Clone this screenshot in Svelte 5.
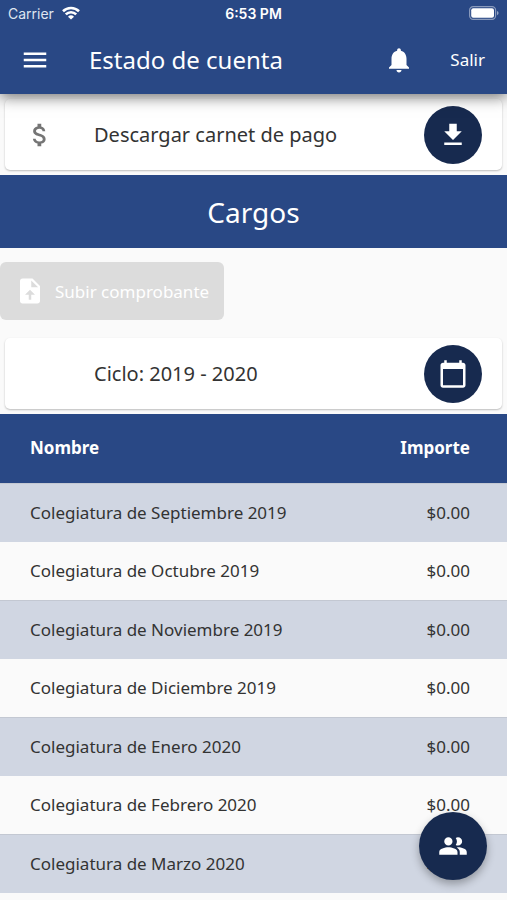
<script>
  let menuAbierto = $state(false);
  let ciclo = $state("2019 - 2020");
  let comprobante = $state(false);
  let cargos = $state([
    { nombre: "Colegiatura de Septiembre 2019", importe: 0 },
    { nombre: "Colegiatura de Octubre 2019", importe: 0 },
    { nombre: "Colegiatura de Noviembre 2019", importe: 0 },
    { nombre: "Colegiatura de Diciembre 2019", importe: 0 },
    { nombre: "Colegiatura de Enero 2020", importe: 0 },
    { nombre: "Colegiatura de Febrero 2020", importe: 0 },
    { nombre: "Colegiatura de Marzo 2020", importe: 0 },
  ]);

  function formatImporte(importe) {
    return "$" + importe.toFixed(2);
  }
</script>

<header>
  <div class="status">
    <div class="carrier">
      <span>Carrier</span>
      <svg width="18" height="14" viewBox="0 0 18 14" stroke="#fff" stroke-width="2.6">
        <path d="M1 5.2a11.5 11.5 0 0 1 16 0" fill="none" />
        <path d="M3.8 8.4a7.4 7.4 0 0 1 10.4 0" fill="none" />
        <path d="M9 13.6L6 10.8a4.3 4.3 0 0 1 6 0z" fill="#fff" stroke="none" />
      </svg>
    </div>
    <span class="time">6:53 PM</span>
    <svg class="battery" width="30" height="14" viewBox="0 0 30 14">
      <rect x="0.6" y="0.6" width="26" height="12.8" rx="3.6" fill="none" stroke="#fff" stroke-opacity="0.45" stroke-width="1.2" />
      <rect x="2.2" y="2.2" width="22.8" height="9.6" rx="2" fill="#fff" />
      <path d="M28 5v4.2q1.6-.6 1.6-2.1T28 5z" fill="#fff" fill-opacity="0.5" />
    </svg>
  </div>
  <nav>
    <button aria-label="Menú" aria-expanded={menuAbierto} onclick={() => (menuAbierto = !menuAbierto)}>
      <svg width="30" height="30" viewBox="0 0 24 24"><path d="M3 18h18v-2H3v2zm0-5h18v-2H3v2zm0-7v2h18V6H3z" /></svg>
    </button>
    <h1>Estado de cuenta</h1>
    <button class="bell" aria-label="Notificaciones">
      <svg width="30" height="30" viewBox="0 0 24 24"><path d="M12 22c1.100 0 2-.9 2-2h-4c0 1.100.9 2 2 2zm6-6v-5c0-3.070-1.640-5.640-4.500-6.320V4c0-.83-.67-1.500-1.500-1.500s-1.500.67-1.500 1.500v.68C7.630 5.360 6 7.920 6 11v5l-2 2v1h16v-1l-2-2z" /></svg>
    </button>
    <button class="salir">Salir</button>
  </nav>
</header>

<main>
  <div class="card">
    <svg class="lead" width="30" height="30" viewBox="0 0 24 24"><path d="M11.800 10.900c-2.270-.59-3-1.200-3-2.150 0-1.090 1.010-1.850 2.700-1.850 1.780 0 2.440.85 2.500 2.100h2.210c-.07-1.720-1.120-3.300-3.210-3.810V3h-3v2.160c-1.940.42-3.500 1.680-3.500 3.610 0 2.310 1.910 3.460 4.700 4.130 2.500.6 3 1.480 3 2.410 0 .69-.49 1.790-2.700 1.790-2.060 0-2.870-.92-2.980-2.100h-2.200c.12 2.190 1.760 3.420 3.680 3.830V21h3v-2.150c1.950-.37 3.500-1.500 3.500-3.550 0-2.840-2.430-3.810-4.700-4.400z" /></svg>
    <span class="text">Descargar carnet de pago</span>
    <button class="round" aria-label="Descargar">
      <svg width="30" height="30" viewBox="0 0 24 24"><path d="M19 9h-4V3H9v6H5l7 7 7-7zM5 18v2h14v-2H5z" /></svg>
    </button>
  </div>

  <h2>Cargos</h2>

  <button class="subir" disabled={!comprobante}>
    <svg width="30" height="30" viewBox="0 0 24 24"><path d="M14 2H6c-1.100 0-1.990.9-1.990 2L4 20c0 1.100.89 2 1.990 2H18c1.100 0 2-.9 2-2V8l-6-6zm-1 13v4h-2v-4H8l4-4 4 4h-3zm0-6V3.500L18.500 9H13z" /></svg>
    <span>Subir comprobante</span>
  </button>

  <div class="card">
    <span class="lead"></span>
    <span class="text">Ciclo: {ciclo}</span>
    <button class="round" aria-label="Elegir ciclo">
      <svg width="30" height="30" viewBox="0 0 24 24"><path d="M20 3h-1V1h-2v2H7V1H5v2H4c-1.100 0-2 .9-2 2v16c0 1.100.9 2 2 2h16c1.100 0 2-.9 2-2V5c0-1.100-.9-2-2-2zm0 18H4V8h16v13z" /></svg>
    </button>
  </div>

  <table>
    <thead>
      <tr>
        <th>Nombre</th>
        <th class="importe">Importe</th>
      </tr>
    </thead>
    <tbody>
      {#each cargos as cargo}
        <tr>
          <td>{cargo.nombre}</td>
          <td class="importe">{formatImporte(cargo.importe)}</td>
        </tr>
      {/each}
    </tbody>
  </table>
</main>

<button class="fab" aria-label="Alumnos">
  <svg width="30" height="30" viewBox="0 0 24 24"><path d="M8.300 11.600a3.300 3.300 0 1 0 0-6.600 3.300 3.300 0 0 0 0 6.600zM16 11.600a3.300 3.300 0 1 0 0-6.600q-1 0-1.800.5a5 5 0 0 1 0 5.600q.8.500 1.800.5zM8.300 13C5.600 13 1 14.200 1 16.700V19h14.600v-2.300C15.600 14.200 11 13 8.300 13zM16 13q-.5 0-1 .1c1.500.9 2.400 2 2.400 3.600V19H23v-2.300C23 14.200 18.700 13 16 13z" /></svg>
</button>

<style>
  :global(body) {
    margin: 0;
    background: #fafafa;
    color: #333;
    font-family: "Noto Sans", sans-serif;
  }

  button {
    border: none;
    padding: 0;
    background: none;
    color: #fff;
    font-family: inherit;
    cursor: pointer;
  }

  svg {
    display: block;
    fill: currentColor;
  }

  header {
    position: relative;
    z-index: 1;
    padding-bottom: 1px;
    background: #294885;
    color: #fff;
    box-shadow: 0 3px 14px rgba(0, 0, 0, 0.55);
  }

  .status {
    display: grid;
    grid-template-columns: 1fr auto 1fr;
    align-items: center;
    height: 26px;
    padding: 0 8px;
    font-family: Inter, sans-serif;
    font-size: 14px;
  }

  .carrier {
    display: flex;
    align-items: center;
    gap: 8px;
    color: #dfe5f0;
  }

  .time {
    font-weight: 600;
  }

  .battery {
    justify-self: end;
  }

  nav {
    display: flex;
    align-items: center;
    height: 67px;
    padding: 0 22px 0 20px;
  }

  h1 {
    flex: 1;
    margin: 0 0 0 39px;
    font-size: 24px;
    font-weight: 400;
  }

  .bell {
    margin-right: 36px;
  }

  .salir {
    font-size: 17px;
  }

  .card {
    display: flex;
    align-items: center;
    height: 71px;
    margin: 5px;
    padding: 0 20px;
    border-radius: 5px;
    background: #fff;
    box-shadow: 0 1px 2px rgba(0, 0, 0, 0.25);
  }

  .lead {
    width: 30px;
    color: #757575;
  }

  .text {
    flex: 1;
    margin-left: 39px;
    font-size: 20px;
  }

  .round,
  .fab {
    display: flex;
    align-items: center;
    justify-content: center;
    border-radius: 50%;
    background: #172a4f;
  }

  .round {
    width: 58px;
    height: 58px;
  }

  h2 {
    margin: 0;
    padding-top: 1px;
    background: #294885;
    color: #fff;
    font-size: 28px;
    font-weight: 400;
    line-height: 72px;
    text-align: center;
  }

  .subir {
    display: flex;
    align-items: center;
    gap: 10px;
    height: 58px;
    margin: 14px 0 18px;
    padding: 0 15px;
    border-radius: 6px;
    background: #dcdcdc;
    font-size: 17px;
  }

  table {
    width: 100%;
    border-spacing: 0;
    font-size: 17px;
  }

  th,
  td {
    height: 56px;
    padding: 0 30px 2px;
    text-align: left;
  }

  th {
    height: 67px;
    background: #294885;
    color: #fff;
  }

  .importe {
    padding-right: 37px;
    text-align: right;
  }

  tbody tr:nth-child(odd) td {
    border-top: 1px solid #c3c8d2;
    background: #d0d6e2;
  }

  .fab {
    position: fixed;
    right: 20px;
    bottom: 20px;
    width: 68px;
    height: 68px;
    box-shadow: 0 4px 8px rgba(0, 0, 0, 0.3);
  }
</style>
